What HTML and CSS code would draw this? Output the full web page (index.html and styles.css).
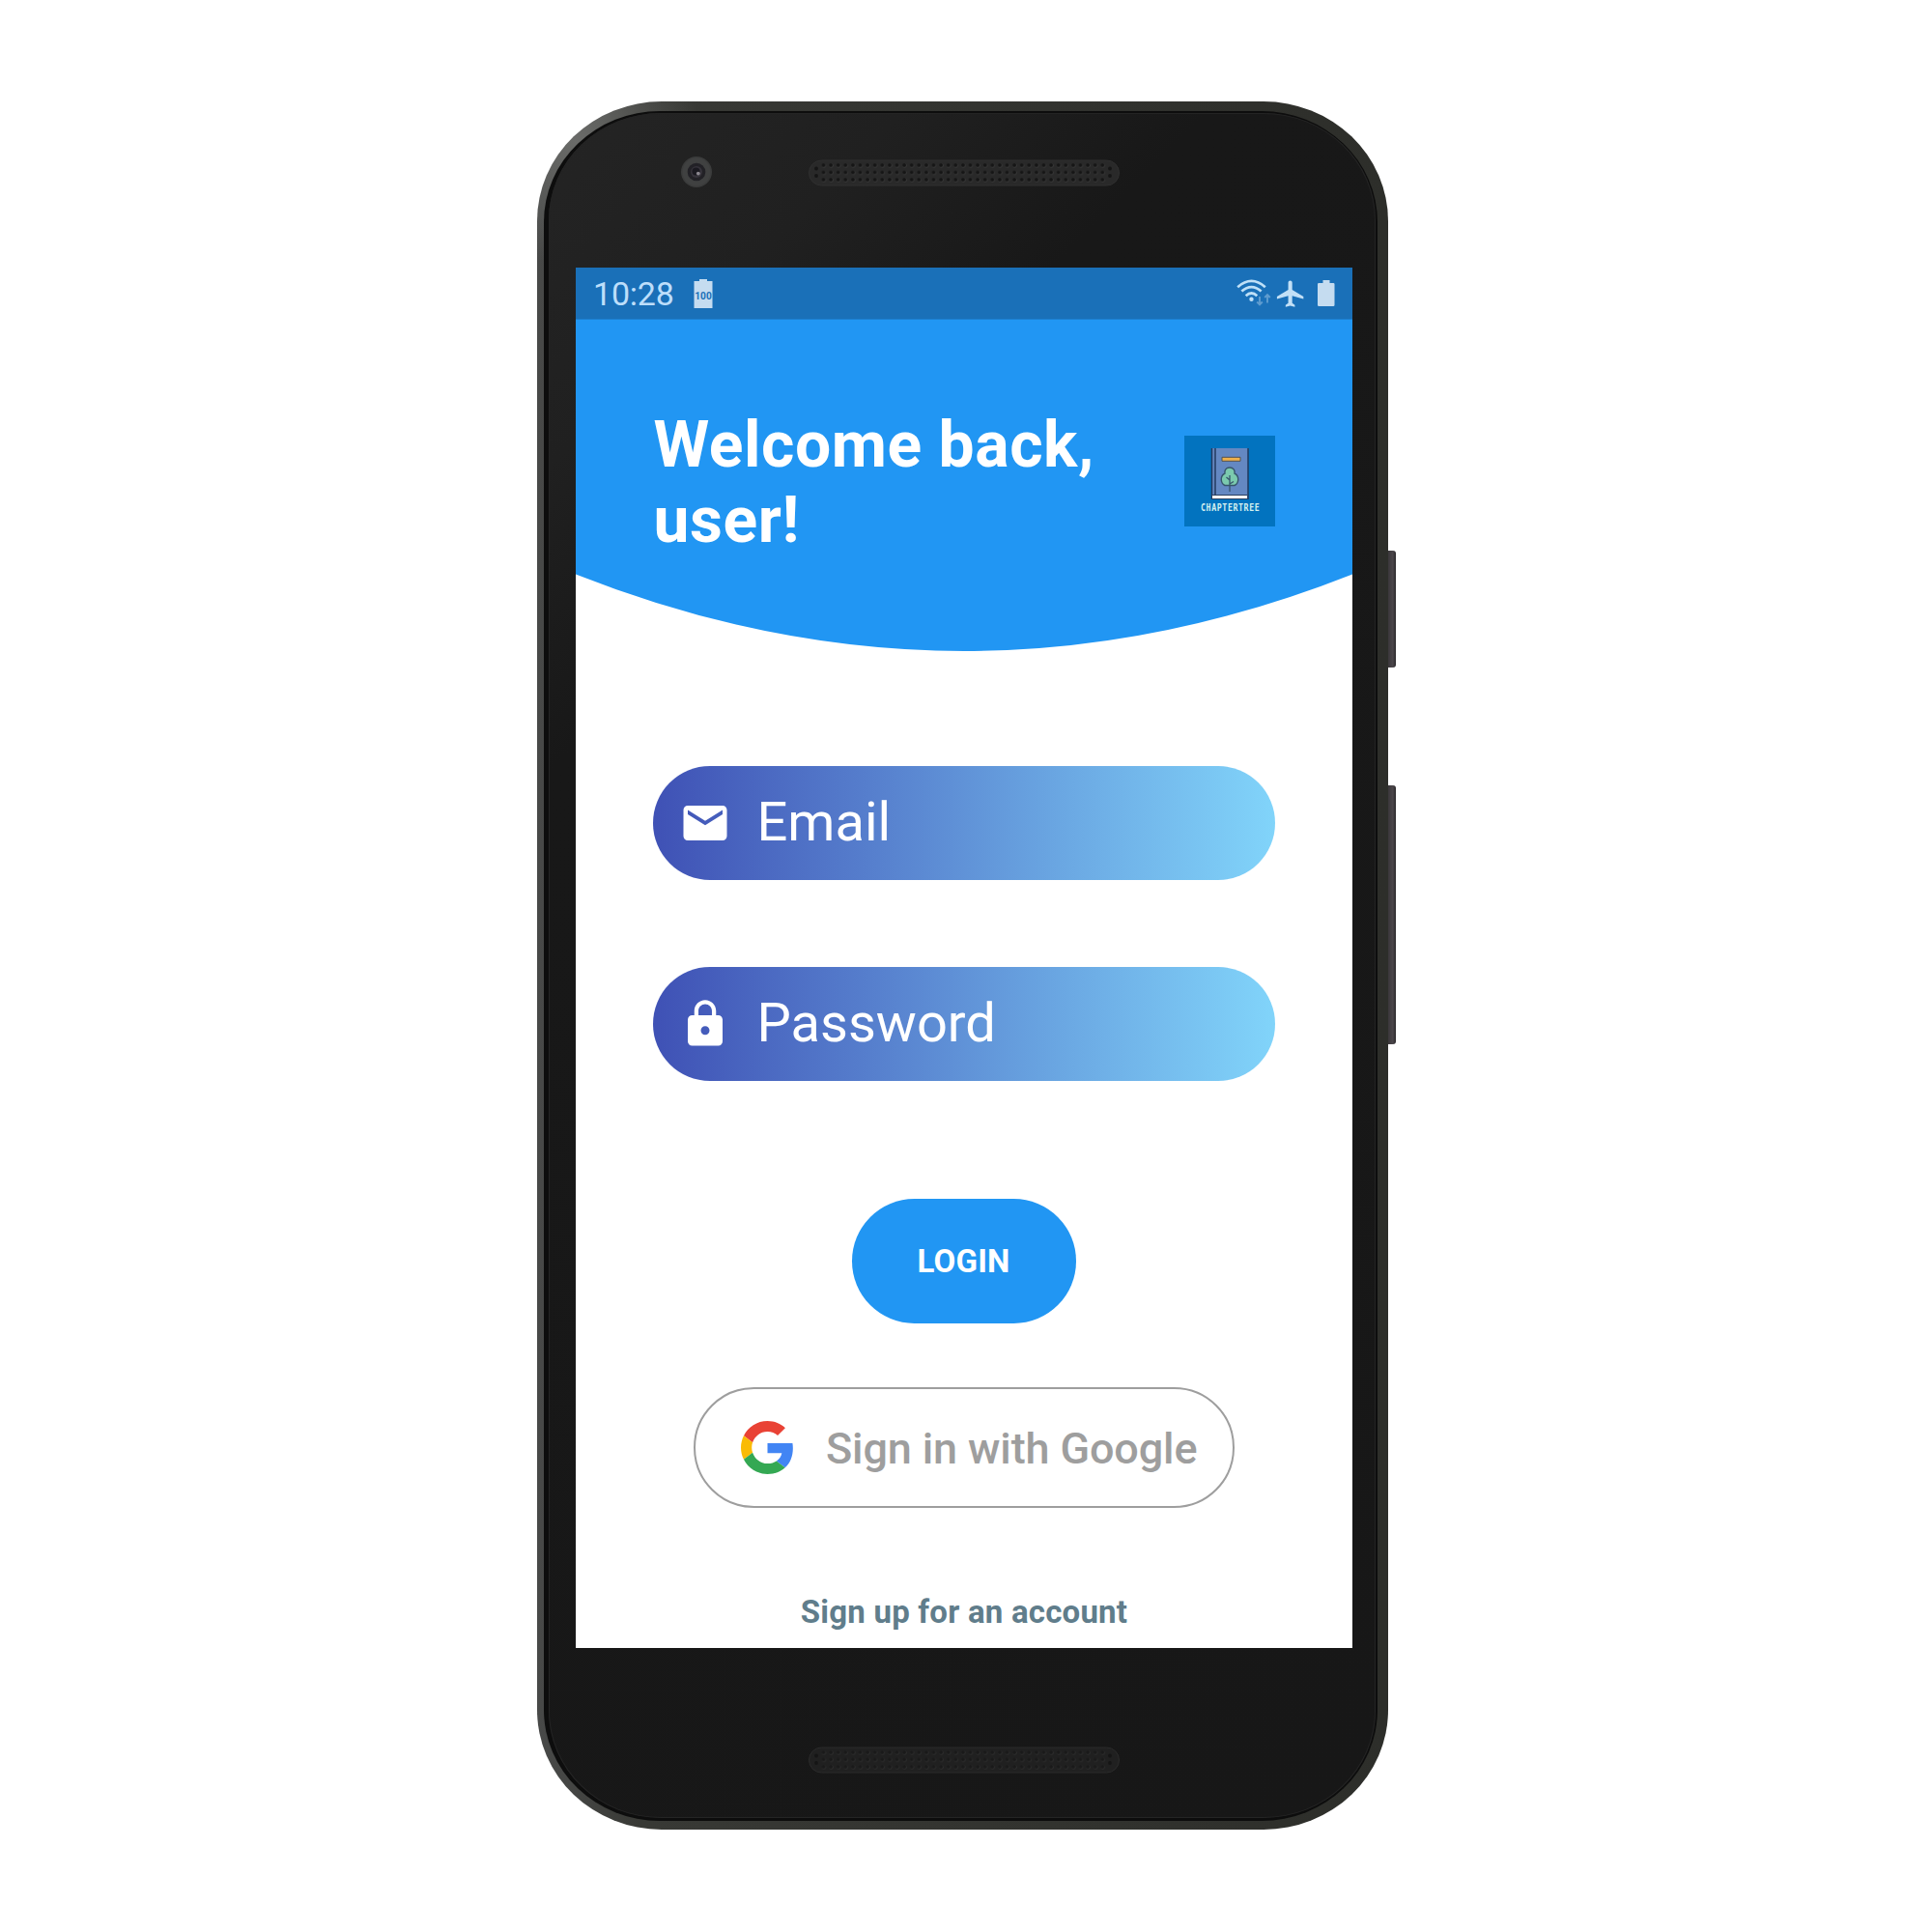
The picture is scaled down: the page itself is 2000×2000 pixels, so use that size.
FILE: index.html
```html
<!DOCTYPE html>
<html lang="en">
<head>
<meta charset="utf-8">
<title>Login</title>
<link rel="stylesheet" href="styles.css">
</head>
<body>
<div class="device">
  <div class="frame"><div class="groove"><div class="face">
    <div class="bezel-top">
      <svg class="camera" viewBox="0 0 34 34">
        <circle cx="17" cy="17" r="16" fill="#3b3c3c"/>
        <circle cx="17" cy="17" r="14.5" fill="#404141"/>
        <circle cx="17" cy="17" r="9.3" fill="#222126"/>
        <circle cx="17" cy="17" r="6" fill="#36333b"/>
        <circle cx="16.5" cy="16.5" r="4" fill="#1a1920"/>
        <circle cx="18.8" cy="18.6" r="1.9" fill="#8b878f"/>
      </svg>
      <svg class="speaker" viewBox="0 0 324 28">
        <defs><pattern id="holes" x="12.7" y="2.2" width="7.6" height="7.5" patternUnits="userSpaceOnUse">
          <circle cx="4.2" cy="4.2" r="2.2" fill="#3a3a3a"/><circle cx="3.8" cy="3.8" r="1.9" fill="#151515"/>
        </pattern></defs>
        <rect x="1.500" y="1" width="321" height="26" rx="13" fill="#292929" stroke="#303030"/>
        <rect x="12.7" y="2.2" width="296.4" height="22.5" fill="url(#holes)"/>
        <g fill="#151515"><circle cx="9" cy="9.5" r="1.9"/><circle cx="9" cy="17" r="1.9"/><circle cx="313" cy="9.5" r="1.9"/><circle cx="313" cy="17" r="1.9"/></g>
      </svg>
    </div>
    <main class="screen">
      <div class="status">
        <span class="clock">10:28</span>
        <svg class="battery-full" viewBox="0 0 20 30">
          <path d="M6 0h8v2h5.500v28H.500V2H6z" fill="#c5dcf0"/>
          <text x="10" y="20.500" text-anchor="middle" textLength="17.500" lengthAdjust="spacingAndGlyphs">100</text>
        </svg>
        <svg class="indicators" viewBox="0 0 104 30">
          <g fill="none" stroke="#bfe0f7" stroke-width="2.700">
            <path d="M2.200 8.200Q16.500-4.400 30.800 8.200"/>
            <path d="M6.400 12.600Q16.500 3.500 26.600 12.600"/>
            <path d="M10.700 17.200Q16.500 11.800 22.300 17.200"/>
          </g>
          <circle cx="16.500" cy="20.800" r="2.200" fill="#bfe0f7"/>
          <path d="M25 18v8M22.200 23.500l2.800 2.800 2.800-2.800M33 24.500v-8M30.200 19l2.800-2.800 2.800 2.800" fill="none" stroke="#5f9ccf" stroke-width="1.900"/>
          <path transform="translate(39.500 -1.300) scale(1.370)" d="M22.500 16v-2l-8.500-5V3.500C14 2.670 13.330 2 12.500 2S11 2.670 11 3.500V9l-8.500 5v2l8.500-2.500V19L9 20.500V22l3.500-1 3.500 1v-1.500L14 19v-5.500l8.500 2.500z" fill="#c3e0f6"/>
          <path d="M90.500 1h7v3h3.800q1.200 0 1.200 1.200v21.600q0 1.200-1.200 1.200H86.200q-1.200 0-1.200-1.200V5.200Q85 4 86.200 4h4.300z" fill="#c5dcf0"/>
        </svg>
      </div>
      <header class="hero">
        <h1>Welcome back,<br>user!</h1>
        <svg class="logo" viewBox="0 0 94 94">
          <rect width="94" height="94" fill="#0273bf"/>
          <path d="M28 13h38v53H28z" fill="#6488c2"/>
          <path d="M28.500 13v53M32 13v49M66 13v53" stroke="#233a5e" stroke-width="1.500"/>
          <path d="M29 62h36v3H29z" fill="#fff"/>
          <path d="M28 61.500h37M28 65.500h38" stroke="#2a3f5f" stroke-width="1"/>
          <path d="M39 22.300h19v4H39z" fill="#efb14b" stroke="#54524f"/>
          <path d="M47 33c4 0 5.500 3 5 6 5 2.500 5 10 0 12.500H42c-5-2.500-5-10 0-12.500-.500-3 1-6 5-6z" fill="#7bcaae" stroke="#37566c" stroke-width="1.400"/>
          <path d="M47 41v17M47 46l-3.500-3M47 50l4-2.500" fill="none" stroke="#37566c" stroke-width="1.300"/>
          <text transform="translate(17 77.800) scale(.75 1)" textLength="81" lengthAdjust="spacing">CHAPTERTREE</text>
        </svg>
      </header>
      <form class="login">
        <label class="field">
          <svg viewBox="0 0 24 24"><path d="M20 4H4c-1.100 0-1.990.900-1.990 2L2 18c0 1.100.900 2 2 2h16c1.100 0 2-.900 2-2V6c0-1.100-.900-2-2-2zm0 4l-8 5-8-5V6l8 5 8-5v2z"/></svg>
          <span>Email</span>
        </label>
        <label class="field">
          <svg viewBox="0 0 24 24"><path d="M18 8h-1V6c0-2.760-2.240-5-5-5S7 3.240 7 6v2H6c-1.100 0-2 .900-2 2v10c0 1.100.900 2 2 2h12c1.100 0 2-.900 2-2V10c0-1.100-.900-2-2-2zm-6 9c-1.100 0-2-.900-2-2s.900-2 2-2 2 .900 2 2-.900 2-2 2zm3.100-9H8.900V6c0-1.710 1.390-3.100 3.100-3.100s3.100 1.390 3.100 3.100v2z"/></svg>
          <span>Password</span>
        </label>
        <button type="button" class="submit">LOGIN</button>
        <button type="button" class="google">
          <svg viewBox="0 0 48 48">
            <path fill="#e94235" d="M24 9.500c3.540 0 6.710 1.220 9.210 3.600l6.850-6.850C35.900 2.380 30.470 0 24 0 14.620 0 6.510 5.380 2.560 13.220l7.980 6.190C12.430 13.720 17.740 9.500 24 9.500z"/>
            <path fill="#4285f4" d="M46.980 24.550c0-1.570-.150-3.090-.380-4.550H24v9.020h12.940c-.580 2.960-2.260 5.480-4.780 7.180l7.730 6c4.510-4.180 7.090-10.360 7.090-17.650z"/>
            <path fill="#fabb05" d="M10.530 28.590c-.480-1.450-.760-2.990-.760-4.590s.270-3.140.760-4.590l-7.980-6.190C.920 16.460 0 20.120 0 24c0 3.880.920 7.540 2.560 10.780l7.970-6.190z"/>
            <path fill="#34a853" d="M24 48c6.480 0 11.930-2.130 15.890-5.810l-7.730-6c-2.150 1.450-4.920 2.300-8.160 2.300-6.260 0-11.570-4.220-13.470-9.910l-7.980 6.190C6.510 42.620 14.620 48 24 48z"/>
          </svg>
          <span>Sign in with Google</span>
        </button>
        <a class="signup">Sign up for an account</a>
      </form>
    </main>
    <div class="bezel-bottom">
      <svg class="speaker speaker-low" viewBox="0 0 324 28">
        <rect x="1.500" y="1" width="321" height="26" rx="13" fill="#202020" stroke="#2b2b2b"/>
        <rect x="12.700" y="2.200" width="296.400" height="22.500" fill="url(#holes)" opacity=".6"/>
        <g fill="#151515"><circle cx="9" cy="9.500" r="1.900"/><circle cx="9" cy="17" r="1.900"/><circle cx="313" cy="9.500" r="1.900"/><circle cx="313" cy="17" r="1.900"/></g>
      </svg>
    </div>
  </div></div></div>
  <div class="keys"><div class="key power"></div><div class="key volume"></div></div>
</div>
</body>
</html>
```
FILE: styles.css
```css
* { box-sizing: border-box; }
body {
  margin: 0;
  width: 2000px;
  height: 2000px;
  background: #fff;
  font-family: Roboto, "Liberation Sans", sans-serif;
  overflow: hidden;
}
svg { display: block; flex: none; }
.device { display: flex; padding: 105px 0 0 556px; }
.frame {
  width: 881px;
  height: 1789px;
  padding: 10px 11px 9px 7px;
  border-radius: 129px / 124px;
  background:
    radial-gradient(circle at 40px 40px, #6a6b69 0, transparent 130px),
    linear-gradient(90deg, #484948 0, #454644 4%, #383935 12%, #32332f 60%, #2d2e2a 100%);
}
.groove {
  height: 100%;
  padding: 2px 2px 3px 5px;
  border-radius: 120px / 115px;
  background: #0d0d0d;
}
.face {
  height: 100%;
  display: flex;
  flex-direction: column;
  border-radius: 116px / 111px;
  background: linear-gradient(135deg, #242424 0, #202020 14%, #181818 26%, #171717 100%);
  box-shadow: inset 0 0 0 1px #242424;
}
.bezel-top {
  height: 160px;
  display: flex;
  align-items: flex-start;
  gap: 98px;
  padding: 45px 0 0 136px;
}
.camera { width: 34px; height: 34px; margin-top: -1px; }
.speaker { width: 324px; height: 28px; margin-top: 3px; }
.speaker-low { margin-top: 4px; }
.bezel-bottom { padding: 98px 0 0 268px; }
.screen {
  width: 804px;
  height: 1429px;
  margin-left: 28px;
  background: #fff;
}
.status {
  height: 54px;
  display: flex;
  align-items: center;
  padding: 1px 17px 0 18px;
  background: #1a70b8;
  border-bottom: 1px solid #1d7fd0;
}
.clock { width: 104px; font-size: 34px; line-height: 40px; letter-spacing: -.2px; color: #bddefa; }
.battery-full { width: 20px; height: 30px; }
.battery-full text { font: 700 11px Roboto, sans-serif; fill: #1a70b8; }
.indicators { width: 104px; height: 30px; margin-left: auto; }
.hero {
  height: 343px;
  display: flex;
  justify-content: space-between;
  align-items: flex-start;
  padding: 91px 80.500px 0 80.500px;
  background: #2196f3;
  clip-path: path("M0 0H804V263.500Q402 422.500 0 263.500Z");
}
h1 { margin: 0; font-size: 66px; line-height: 78px; letter-spacing: .55px; font-weight: 700; color: #fff; }
.logo { width: 94px; height: 94px; margin-top: 29px; }
.logo text { font: 700 11px "DejaVu Sans Mono", monospace; fill: #d5f0ef; }
.login {
  display: flex;
  flex-direction: column;
  align-items: center;
  padding-top: 118.500px;
}
.field {
  width: 644px;
  height: 118px;
  display: flex;
  align-items: center;
  gap: 26.500px;
  padding-left: 27px;
  border-radius: 59px;
  background: linear-gradient(90deg, #3f51b5, #81d4fa);
  color: #fff;
  font-size: 56px;
}
.field + .field { margin-top: 90px; }
.field svg { width: 54px; height: 54px; fill: #fff; }
.field span { padding-bottom: 1px; }
button { font-family: inherit; padding: 0; border: 0; }
.submit {
  width: 232px;
  height: 129px;
  margin-top: 122px;
  padding: 0 1px 0 0;
  border-radius: 65px;
  background: #2196f3;
  color: #fff;
  font-size: 33px;
  font-weight: 700;
  letter-spacing: .2px;
}
.google {
  width: 560px;
  height: 125px;
  margin-top: 66px;
  display: flex;
  align-items: center;
  gap: 33.500px;
  padding-left: 46.500px;
  border: 2px solid #9e9e9e;
  border-radius: 63px;
  background: #fff;
  color: #9e9e9e;
  font-size: 45px;
  font-weight: 500;
  letter-spacing: -.14px;
  white-space: nowrap;
}
.google span { padding-top: 2px; }
.google svg { width: 55px; height: 55px; }
.signup { margin-top: 88px; font-size: 33px; line-height: 40px; letter-spacing: .21px; font-weight: 700; color: #607d8b; }
.keys { width: 8px; padding-top: 465px; }
.key { border-radius: 0 3px 3px 0; background: linear-gradient(90deg, #3a363a, #4b464a 60%, #2c292c); }
.power { height: 121px; }
.volume { height: 268px; margin-top: 122px; }
```
